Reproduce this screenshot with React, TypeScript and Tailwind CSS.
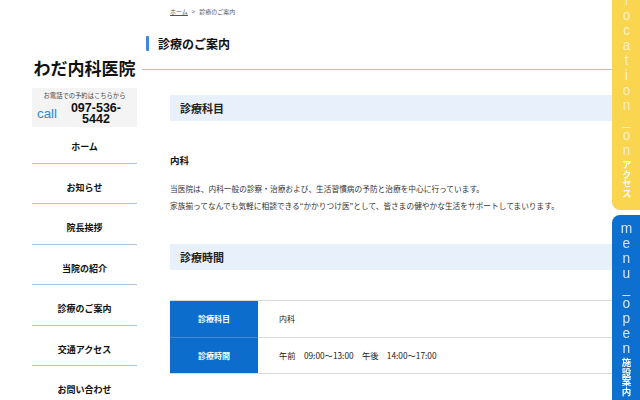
import type { ReactNode } from "react";

const navItems = [
  "ホーム",
  "お知らせ",
  "院長挨拶",
  "当院の紹介",
  "診療のご案内",
  "交通アクセス",
  "お問い合わせ",
];

function SectionTitle({ children }: { children: ReactNode }) {
  return (
    <div className="flex h-[26px] items-center bg-[#e8f1fb] pl-[10px] text-[11px] font-bold text-[#222]">
      {children}
    </div>
  );
}

function SideTabs() {
  return (
    <div className="fixed right-0 top-0 flex w-[28px] flex-col">
      <div className="-mt-[20px] flex h-[230px] flex-col items-center rounded-bl-[8px] bg-[#fad650] pt-[13px]">
        <span className="text-[13.8px] leading-none text-[#fdf0bd] [text-orientation:upright] [writing-mode:vertical-rl] font-['Liberation_Sans',sans-serif]">
          location_on
        </span>
        <span className="mt-[2px] text-[9.5px] font-bold leading-none text-white [writing-mode:vertical-rl] font-['Noto_Sans_CJK_JP',sans-serif]">
          アクセス
        </span>
      </div>
      <div className="mt-[5px] flex h-[200px] flex-col items-center rounded-tl-[8px] bg-[#0d6fcf] pt-[6px]">
        <span className="text-[13.8px] leading-none text-[#d7e6f7] [text-orientation:upright] [writing-mode:vertical-rl] font-['Liberation_Sans',sans-serif]">
          menu_open
        </span>
        <span className="mt-[2px] text-[9.5px] font-bold leading-[11px] text-white [writing-mode:vertical-rl] font-['Noto_Sans_CJK_JP',sans-serif]">
          施設案内
        </span>
      </div>
    </div>
  );
}

const hours = "午前　09:00〜13:00　午後　14:00〜17:00";

export default function App() {
  return (
    <div className="relative flex h-[400px] w-[640px] overflow-hidden bg-white text-[#222] font-['Liberation_Sans','Noto_Sans_CJK_JP',sans-serif]">
      <aside className="w-[137px] shrink-0 pl-[32px]">
        <h1 className="pt-[56px] text-center text-[17px] font-bold leading-[24px] text-[#111] font-['Noto_Sans_CJK_JP',sans-serif]">
          わだ内科医院
        </h1>
        <div className="mt-[8px] h-[39px] bg-[#f4f4f4] pt-[3px]">
          <p className="text-center text-[6.3px] leading-[9px] text-[#444] font-['Noto_Sans_CJK_JP',sans-serif]">
            お電話での予約はこちらから
          </p>
          <div className="mt-[3px] flex items-center">
            <span className="ml-[5px] text-[13.3px] leading-none text-[#2f86cf]">call</span>
            <span className="ml-[11px] w-[56px] whitespace-nowrap text-center text-[12.5px] font-bold leading-[11px] text-[#111]">
              097-536-
              <br />
              5442
            </span>
          </div>
        </div>
        <nav>
          {navItems.map((item, index) => (
            <a
              key={item}
              className={`flex items-center justify-center border-b border-[#a9c6e3] text-[9px] font-bold text-[#111] font-['Noto_Sans_CJK_JP',sans-serif] ${
                index === 0 ? "h-[37px] pt-[4px]" : "h-[40.4px] pt-[8px]"
              }`}
            >
              {item}
            </a>
          ))}
        </nav>
      </aside>

      <main className="mr-[28px] min-w-0 flex-1">
        <div className="pl-[33px] pt-[8px] text-[6px] leading-[8px] text-[#555] font-['Noto_Sans_CJK_JP',sans-serif]">
          <span className="underline">ホーム</span>
          <span className="mx-[4px]">&gt;</span>
          <span>診療のご案内</span>
        </div>

        <div className="ml-[5px] mt-[20px] flex h-[34px] items-start border-b border-[#a3c5e8] pl-[4px]">
          <span className="h-[15px] w-[3px] rounded-[1px] bg-[#3e87d9]" />
          <h2 className="ml-[9px] text-[12px] font-bold leading-[15px] text-[#111] font-['Noto_Sans_CJK_JP',sans-serif]">
            診療のご案内
          </h2>
        </div>

        <div className="pl-[33px] font-['Noto_Sans_CJK_JP',sans-serif]">
          <div className="mt-[25px]">
            <SectionTitle>診療科目</SectionTitle>
          </div>
          <h3 className="mt-[33px] text-[9.5px] font-bold leading-[12px] text-[#111]">内科</h3>
          <div className="mt-[14px] text-[7.7px] leading-[17px] text-[#333]">
            <p>当医院は、内科一般の診察・治療および、生活習慣病の予防と治療を中心に行っています。</p>
            <p>家族揃ってなんでも気軽に相談できる“かかりつけ医”として、皆さまの健やかな生活をサポートしてまいります。</p>
          </div>

          <div className="mt-[30px]">
            <SectionTitle>診療時間</SectionTitle>
          </div>

          <table className="mt-[30px] w-full border-collapse text-[8px]">
            <tbody>
              <tr className="h-[37px] border-b border-t border-[#d9d9d9]">
                <th className="w-[88px] bg-[#0c6dcc] font-bold text-white">診療科目</th>
                <td className="pl-[21px] text-[#222]">内科</td>
              </tr>
              <tr className="h-[36px] border-b border-[#d9d9d9]">
                <th className="w-[88px] border-t border-[#3f8ad8] bg-[#0c6dcc] font-bold text-white">診療時間</th>
                <td className="whitespace-pre pl-[21px] text-[8.3px] text-[#222]">{hours}</td>
              </tr>
            </tbody>
          </table>
        </div>
      </main>

      <SideTabs />
    </div>
  );
}
